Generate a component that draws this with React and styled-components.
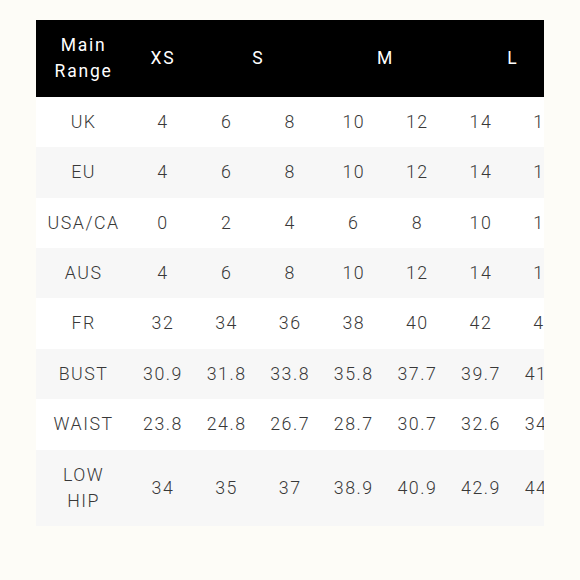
import React from "react";
import styled, { createGlobalStyle } from "styled-components";

const Global = createGlobalStyle`
  html, body { margin: 0; padding: 0; background: #fdfcf7; }
  body { font-family: Roboto, "Liberation Sans", sans-serif; }
`;

const Page = styled.div`
  padding: 20px 36px;
`;

const Scroller = styled.div`
  width: 508px;
  overflow: hidden;
`;

const Table = styled.table`
  border-collapse: collapse;
  table-layout: fixed;
  width: ${95.2 + 63.6 * 8}px;
`;

const HeadRow = styled.tr`
  background: #000;
`;

const HeadCell = styled.th`
  color: #fff;
  font-weight: 400;
  font-size: 17.5px;
  line-height: 26.4px;
  letter-spacing: 1.8px;
  padding: 12px 0;
  text-align: center;
  white-space: nowrap;
`;

const Row = styled.tr`
  background: ${(p) => (p.$alt ? "#f7f7f7" : "#ffffff")};
`;

const Cell = styled.td`
  color: #383838;
  font-weight: 300;
  font-size: 17.8px;
  line-height: 26.4px;
  letter-spacing: 1.5px;
  padding: 12px 0;
  text-align: center;
  white-space: nowrap;
`;

const LabelCell = styled(Cell)`
  white-space: normal;
`;

const headers = [
  { label: ["Main", "Range"], span: 1 },
  { label: ["XS"], span: 1 },
  { label: ["S"], span: 2 },
  { label: ["M"], span: 2 },
  { label: ["L"], span: 2 },
];

const rows = [
  ["UK", "4", "6", "8", "10", "12", "14", "16"],
  ["EU", "4", "6", "8", "10", "12", "14", "16"],
  ["USA/CA", "0", "2", "4", "6", "8", "10", "12"],
  ["AUS", "4", "6", "8", "10", "12", "14", "16"],
  ["FR", "32", "34", "36", "38", "40", "42", "44"],
  ["BUST", "30.9", "31.8", "33.8", "35.8", "37.7", "39.7", "41.7"],
  ["WAIST", "23.8", "24.8", "26.7", "28.7", "30.7", "32.6", "34.6"],
  [["LOW", "HIP"], "34", "35", "37", "38.9", "40.9", "42.9", "44.9"],
];

const Lines = ({ parts }) =>
  parts.map((p, i) => (
    <React.Fragment key={i}>
      {i > 0 && <br />}
      {p}
    </React.Fragment>
  ));

export default function App() {
  return (
    <>
      <Global />
      <Page>
        <Scroller>
          <Table>
            <colgroup>
              <col style={{ width: 95.2 }} />
              {Array.from({ length: 8 }).map((_, i) => (
                <col key={i} style={{ width: 63.6 }} />
              ))}
            </colgroup>
            <thead>
              <HeadRow>
                {headers.map((h, i) => (
                  <HeadCell key={i} colSpan={h.span}>
                    <Lines parts={h.label} />
                  </HeadCell>
                ))}
              </HeadRow>
            </thead>
            <tbody>
              {rows.map((r, i) => (
                <Row key={i} $alt={i % 2 === 1}>
                  <LabelCell>
                    <Lines parts={Array.isArray(r[0]) ? r[0] : [r[0]]} />
                  </LabelCell>
                  {r.slice(1).map((v, j) => (
                    <Cell key={j}>{v}</Cell>
                  ))}
                </Row>
              ))}
            </tbody>
          </Table>
        </Scroller>
      </Page>
    </>
  );
}
